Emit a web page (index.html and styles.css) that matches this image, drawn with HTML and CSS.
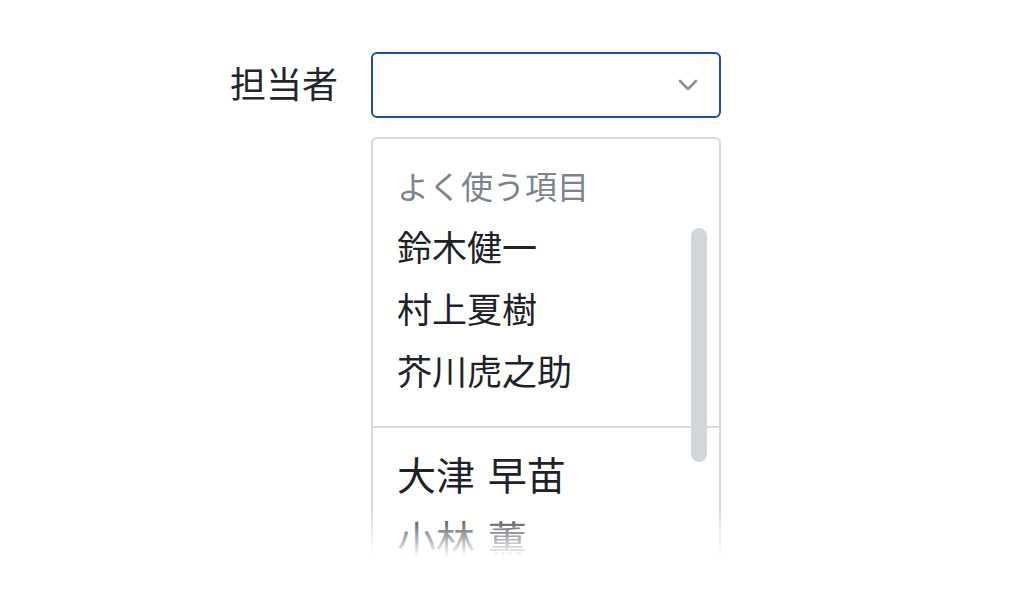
FILE: index.html
```html
<!DOCTYPE html>
<html lang="ja">
    <head>
        <meta charset="utf-8">
        <link rel="stylesheet" href="styles.css">
        <title>担当者</title>
    </head>

    <body>
        <div class="form">
            <label class="field-label" for="assignee">担当者</label>
            <div class="select" id="assignee">
                <svg class="select-chevron" width="20" height="12" viewBox="0 0 20 12">
                    <polyline points="2,2 10,10 18,2" fill="none" stroke="#8a9199" stroke-width="2.6" stroke-linecap="round" stroke-linejoin="round"/>
                </svg>
            </div>

            <div class="dropdown-wrap">
                <div class="dropdown">
                    <div class="dropdown-group">
                        <div class="dropdown-heading">よく使う項目</div>
                        <div class="dropdown-item">鈴木健一</div>
                        <div class="dropdown-item">村上夏樹</div>
                        <div class="dropdown-item">芥川虎之助</div>
                    </div>
                    <div class="dropdown-group dropdown-group-all">
                        <div class="dropdown-item dropdown-item-large">大津 早苗</div>
                        <div class="dropdown-item dropdown-item-large">小林 薫</div>
                    </div>
                    <div class="dropdown-scrollbar"></div>
                </div>
                <div class="dropdown-fade"></div>
            </div>
        </div>
    </body>
</html>
```

FILE: styles.css
```css
html, body {
    margin: 0;
    height: 100%;
    overflow: hidden;
    background-color: #ffffff;
}

body {
    font-family: "Noto Sans CJK JP", "Noto Sans", sans-serif;
    color: #1d2228;
}

.form {
    display: grid;
    grid-template-columns: auto 350px;
    justify-content: start;
    column-gap: 33px;
    row-gap: 19px;
    align-items: center;
    padding-top: 52px;
    padding-left: 230px;
}

.field-label {
    font-size: 36px;
    line-height: 40px;
    padding-bottom: 6px;
    color: #22262b;
}

.select {
    box-sizing: border-box;
    height: 66px;
    border: 2px solid #1b4f9f;
    border-radius: 6px;
    display: flex;
    align-items: center;
    justify-content: flex-end;
    padding-right: 21px;
}

.select-chevron {
    display: block;
}

.dropdown-wrap {
    grid-column: 2;
    position: relative;
}

.dropdown {
    position: relative;
    box-sizing: border-box;
    height: 436px;
    border: 2px solid #d5d9dd;
    border-radius: 6px;
    overflow: hidden;
}

.dropdown-group {
    padding: 16px 24px 25px;
}

.dropdown-group-all {
    border-top: 2px solid #d5d9dd;
    padding-top: 13px;
    padding-bottom: 0;
}

.dropdown-heading {
    font-size: 32px;
    line-height: 60px;
    color: #7b848d;
}

.dropdown-item {
    font-size: 35px;
    line-height: 62px;
    white-space: nowrap;
}

.dropdown-item-large {
    font-size: 39px;
    line-height: 64px;
    word-spacing: 4px;
}

.dropdown-scrollbar {
    position: absolute;
    top: 89px;
    right: 12px;
    width: 16px;
    height: 234px;
    border-radius: 8px;
    background-color: #d1d6db;
}

.dropdown-fade {
    position: absolute;
    left: -4px;
    right: -4px;
    top: 368px;
    bottom: -4px;
    background: linear-gradient(to bottom, rgba(255, 255, 255, 0) 0px, #ffffff 52px);
}
```
